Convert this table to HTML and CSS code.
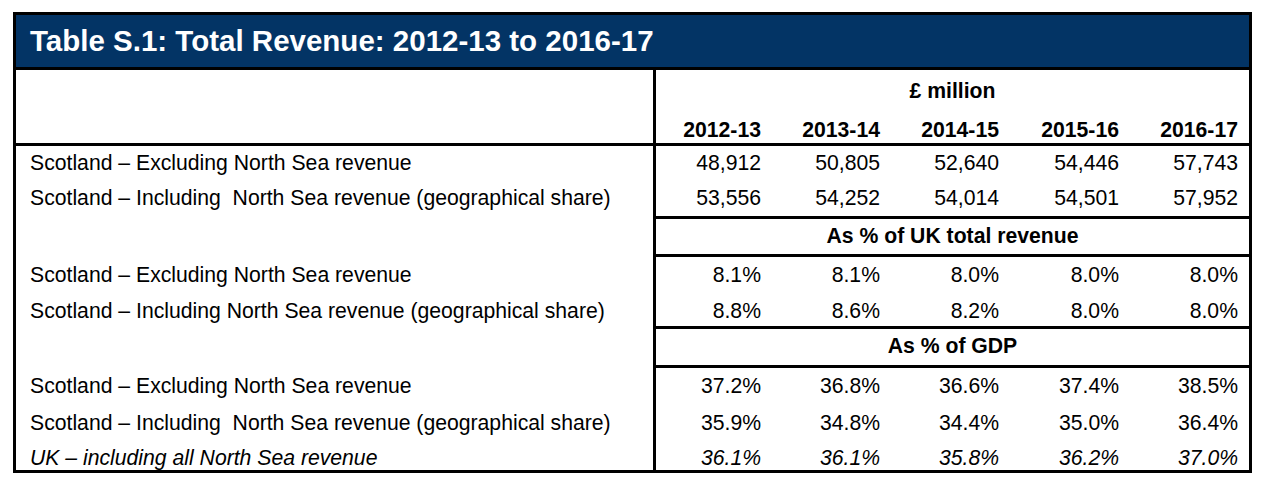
FILE: index.html
```html
<!DOCTYPE html>
<html lang="en">
<head>
<meta charset="utf-8">
<title>Table S.1: Total Revenue</title>
<link rel="stylesheet" href="styles.css">
</head>
<body>
<div class="sheet">
  <div class="tbl">
    <div class="title">Table S.1: Total Revenue: 2012-13 to 2016-17</div>
    <div class="grid">
      <div class="sp sp-head"></div>
      <div class="unit">£ million</div>
      <div class="yr">2012-13</div>
      <div class="yr">2013-14</div>
      <div class="yr">2014-15</div>
      <div class="yr">2015-16</div>
      <div class="yr">2016-17</div>

      <div class="line line-full"></div>

      <div class="label r-a">Scotland – Excluding North Sea revenue</div>
      <div class="num r-a">48,912</div><div class="num r-a">50,805</div><div class="num r-a">52,640</div><div class="num r-a">54,446</div><div class="num r-a">57,743</div>
      <div class="label r-b">Scotland – Including&nbsp; North Sea revenue (geographical share)</div>
      <div class="num r-b">53,556</div><div class="num r-b">54,252</div><div class="num r-b">54,014</div><div class="num r-b">54,501</div><div class="num r-b">57,952</div>

      <div class="sp"></div><div class="line line-right"></div>
      <div class="sp"></div><div class="sub">As % of UK total revenue</div>
      <div class="sp"></div><div class="line line-right"></div>

      <div class="label r-c">Scotland – Excluding North Sea revenue</div>
      <div class="num r-c">8.1%</div><div class="num r-c">8.1%</div><div class="num r-c">8.0%</div><div class="num r-c">8.0%</div><div class="num r-c">8.0%</div>
      <div class="label r-d">Scotland – Including North Sea revenue (geographical share)</div>
      <div class="num r-d">8.8%</div><div class="num r-d">8.6%</div><div class="num r-d">8.2%</div><div class="num r-d">8.0%</div><div class="num r-d">8.0%</div>

      <div class="sp"></div><div class="line line-right"></div>
      <div class="sp"></div><div class="sub">As % of GDP</div>
      <div class="sp"></div><div class="line line-right"></div>

      <div class="label r-e">Scotland – Excluding North Sea revenue</div>
      <div class="num r-e">37.2%</div><div class="num r-e">36.8%</div><div class="num r-e">36.6%</div><div class="num r-e">37.4%</div><div class="num r-e">38.5%</div>
      <div class="label r-f">Scotland – Including&nbsp; North Sea revenue (geographical share)</div>
      <div class="num r-f">35.9%</div><div class="num r-f">34.8%</div><div class="num r-f">34.4%</div><div class="num r-f">35.0%</div><div class="num r-f">36.4%</div>
      <div class="label r-g it">UK – including all North Sea revenue</div>
      <div class="num r-g it">36.1%</div><div class="num r-g it">36.1%</div><div class="num r-g it">35.8%</div><div class="num r-g it">36.2%</div><div class="num r-g it">37.0%</div>
    </div>
  </div>
</div>
</body>
</html>
```

FILE: styles.css
```css
* { box-sizing: border-box; }

html, body {
  margin: 0;
  padding: 0;
  background: #ffffff;
}

body {
  font-family: "Liberation Sans", Arial, sans-serif;
  color: #000000;
}

.sheet {
  padding: 12px 0 0 13px;
}

.tbl {
  width: 1239px;
  border: 3px solid #000000;
}

.title {
  height: 55px;
  background: #033465;
  border-bottom: 3px solid #000000;
  color: #ffffff;
  font-weight: bold;
  font-size: 29.5px;
  line-height: 52px;
  padding-left: 14px;
  white-space: nowrap;
}

.grid {
  display: grid;
  grid-template-columns: 640px 116px 119px 119px 120px 119px;
  grid-template-rows: 40px 33px 3px 35px 35px 3px 35px 3px 35px 34px 3px 36px 3px 36px 36px 30px;
  font-size: 21.2px;
  line-height: 24px;
}

.sp {
  border-right: 3px solid #000000;
}

.sp-head {
  grid-row: span 2;
}

.line {
  background: #000000;
}

.line-full {
  grid-column: 1 / -1;
}

.line-right {
  grid-column: 2 / -1;
}

.unit {
  grid-column: 2 / -1;
  text-align: center;
  font-weight: bold;
  padding-top: 9px;
}

.yr {
  font-weight: bold;
  text-align: right;
  padding-right: 11px;
  padding-top: 8px;
}

.sub {
  grid-column: 2 / -1;
  text-align: center;
  font-weight: bold;
  padding-top: 5px;
}

.label {
  border-right: 3px solid #000000;
  padding-left: 14px;
  white-space: nowrap;
}

.num {
  text-align: right;
  padding-right: 11px;
}

.it {
  font-style: italic;
}

.r-a { padding-top: 5px; }
.r-b { padding-top: 5px; }
.r-c { padding-top: 6px; }
.r-d { padding-top: 7px; }
.r-e { padding-top: 6px; }
.r-f { padding-top: 7px; }
.r-g { padding-top: 6px; }
```
